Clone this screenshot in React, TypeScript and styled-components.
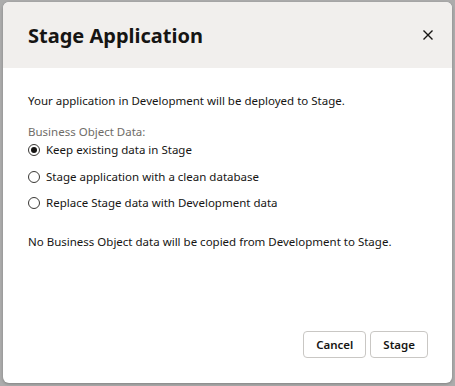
import React, { useState } from "react";
import styled, { createGlobalStyle } from "styled-components";

const GlobalStyle = createGlobalStyle`
  html, body {
    margin: 0;
    padding: 0;
    background: #acacac;
  }
  body {
    font-family: "Noto Sans", "Open Sans", sans-serif;
    color: #161513;
  }
`;

const Backdrop = styled.div`
  width: 455px;
  height: 386px;
  box-sizing: border-box;
  padding: 2px 3px 3px 3px;
  display: flex;
`;

const Dialog = styled.div`
  flex: 1;
  display: flex;
  flex-direction: column;
  background: #ffffff;
  border-radius: 6px;
  overflow: hidden;
  box-shadow: 0 1px 3px rgba(0, 0, 0, 0.25);
`;

const Header = styled.div`
  height: 66px;
  flex-shrink: 0;
  display: flex;
  align-items: center;
  justify-content: space-between;
  padding: 0 12px 0 25px;
  background: #f1efed;
`;

const Title = styled.h1`
  margin: 0;
  font-size: 20px;
  font-weight: 700;
  color: #161513;
`;

const CloseButton = styled.button`
  width: 24px;
  height: 24px;
  display: flex;
  align-items: center;
  justify-content: center;
  padding: 0;
  border: none;
  background: transparent;
  cursor: pointer;
`;

const Body = styled.div`
  flex: 1;
  display: flex;
  flex-direction: column;
  padding: 24px 25px 0 25px;
  font-size: 11.5px;
  line-height: 18px;
`;

const Text = styled.p<{ $gap?: number }>`
  margin: 0 0 ${(p) => p.$gap ?? 0}px 0;
`;

const Label = styled.div`
  color: #6f6c68;
  margin-top: 1px;
`;

const Options = styled.div`
  display: flex;
  flex-direction: column;
  gap: 8.5px;
  margin-bottom: 21px;
`;

const Option = styled.label`
  display: flex;
  align-items: center;
  gap: 6px;
  cursor: pointer;
`;

const Radio = styled.span<{ $checked: boolean }>`
  width: 12px;
  height: 12px;
  box-sizing: border-box;
  border-radius: 50%;
  border: 1px solid #3a3835;
  display: flex;
  align-items: center;
  justify-content: center;
  &::after {
    content: "";
    width: 6px;
    height: 6px;
    border-radius: 50%;
    background: #161513;
    display: ${(p) => (p.$checked ? "block" : "none")};
  }
`;

const Footer = styled.div`
  display: flex;
  justify-content: flex-end;
  gap: 4px;
  padding: 0 24px 25px 0;
`;

const Button = styled.button`
  height: 27px;
  padding: 0 12px;
  border: 1px solid #c9c7c4;
  border-radius: 4px;
  background: #ffffff;
  font-family: "Noto Sans", "Open Sans", sans-serif;
  font-size: 11.5px;
  font-weight: 600;
  color: #161513;
  cursor: pointer;
`;

const options = [
  "Keep existing data in Stage",
  "Stage application with a clean database",
  "Replace Stage data with Development data",
];

export default function App() {
  const [selected, setSelected] = useState(0);

  return (
    <>
      <GlobalStyle />
      <Backdrop>
        <Dialog>
          <Header>
            <Title>Stage Application</Title>
            <CloseButton aria-label="Close">
              <svg width="12" height="12" viewBox="0 0 12 12">
                <path d="M1.5 1.5L10.5 10.5M10.5 1.5L1.5 10.5" stroke="#161513" strokeWidth="1.4" />
              </svg>
            </CloseButton>
          </Header>
          <Body>
            <Text $gap={12}>Your application in Development will be deployed to Stage.</Text>
            <Label>Business Object Data:</Label>
            <Options>
              {options.map((o, i) => (
                <Option key={o} onClick={() => setSelected(i)}>
                  <Radio $checked={selected === i} />
                  {o}
                </Option>
              ))}
            </Options>
            <Text>No Business Object data will be copied from Development to Stage.</Text>
          </Body>
          <Footer>
            <Button>Cancel</Button>
            <Button>Stage</Button>
          </Footer>
        </Dialog>
      </Backdrop>
    </>
  );
}
